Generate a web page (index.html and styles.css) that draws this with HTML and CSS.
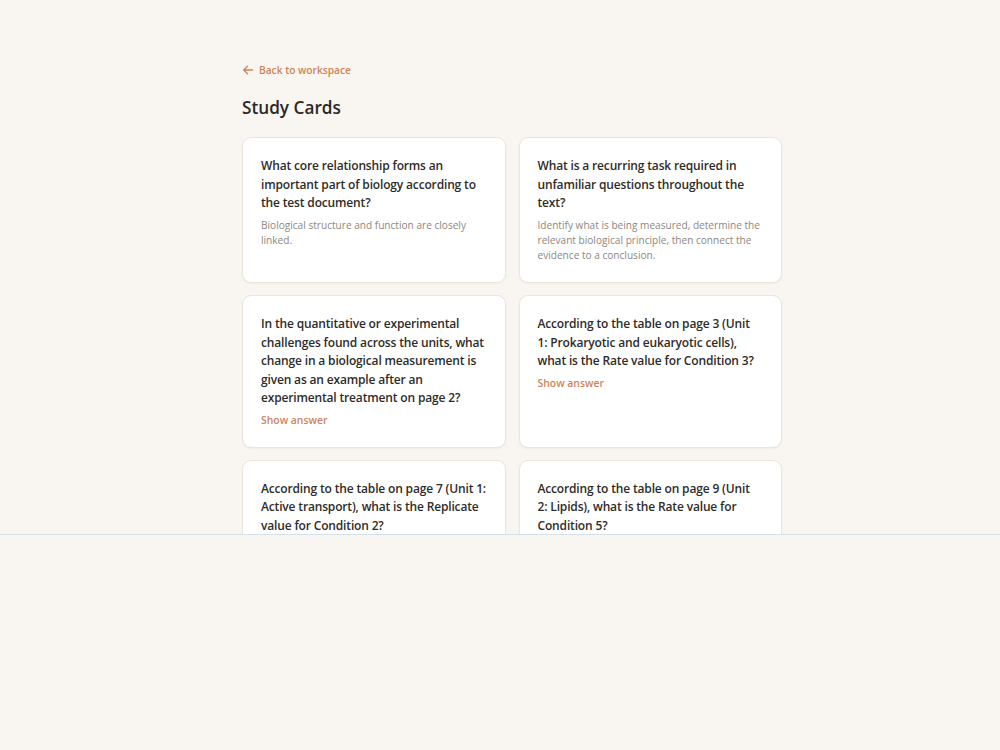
FILE: index.html
```html
<!DOCTYPE html>
<html>
<head>
<meta charset="utf-8">
<link rel="stylesheet" href="styles.css">
</head>
<body>
<div class="frame">
  <main class="page">
    <a class="back" href="#">
      <svg width="12" height="12" viewBox="0 0 12 12" fill="none" stroke="currentColor" stroke-width="1.3" stroke-linecap="round" stroke-linejoin="round"><path d="M10.5 6H1.8M5.5 2.2L1.7 6l3.8 3.8"/></svg>
      <span>Back to workspace</span>
    </a>
    <h1 class="title">Study Cards</h1>
    <div class="grid">
      <div class="card">
        <div class="q">What core relationship forms an important part of biology according to the test document?</div>
        <div class="a">Biological structure and function are closely linked.</div>
      </div>
      <div class="card">
        <div class="q">What is a recurring task required in unfamiliar questions throughout the text?</div>
        <div class="a">Identify what is being measured, determine the relevant biological principle, then connect the evidence to a conclusion.</div>
      </div>
      <div class="card">
        <div class="q">In the quantitative or experimental challenges found across the units, what change in a biological measurement is given as an example after an experimental treatment on page 2?</div>
        <a class="show" href="#">Show answer</a>
      </div>
      <div class="card">
        <div class="q">According to the table on page 3 (Unit 1: Prokaryotic and eukaryotic cells), what is the Rate value for Condition 3?</div>
        <a class="show" href="#">Show answer</a>
      </div>
      <div class="card">
        <div class="q">According to the table on page 7 (Unit 1: Active transport), what is the Replicate value for Condition 2?</div>
        <a class="show" href="#">Show answer</a>
      </div>
      <div class="card">
        <div class="q">According to the table on page 9 (Unit 2: Lipids), what is the Rate value for Condition 5?</div>
        <a class="show" href="#">Show answer</a>
      </div>
    </div>
  </main>
</div>
</body>
</html>
```
FILE: styles.css
```css
html, body {
  margin: 0;
  padding: 0;
  background: #f9f6f1;
}
body {
  font-family: "Open Sans", "Noto Sans", sans-serif;
  color: #2c2a27;
}
.frame {
  height: 534px;
  overflow: hidden;
  border-bottom: 1px solid #d3e2ea;
  background: #f9f6f1;
}
.page {
  width: 540px;
  margin: 0 auto;
  padding: 59px 0 40px;
  position: relative;
  left: 12px;
}
.back {
  display: inline-flex;
  align-items: center;
  gap: 5px;
  color: #cd835a;
  text-decoration: none;
  font-size: 10.2px;
  font-weight: 600;
  line-height: 16px;
}
.title {
  margin: 14px 0 0;
  font-size: 17.2px;
  font-weight: 600;
  line-height: 26px;
  color: #2a2826;
}
.grid {
  margin-top: 16px;
  display: grid;
  grid-template-columns: 1fr 1fr;
  column-gap: 13px;
  row-gap: 12px;
}
.card {
  background: #ffffff;
  border: 1px solid #ebe5dc;
  border-radius: 9px;
  box-shadow: 0 1px 2px rgba(60, 40, 20, 0.05);
  padding: 19px 18px 19px;
}
.card:nth-child(even) {
  padding-right: 19.5px;
}
.q {
  font-size: 12px;
  letter-spacing: -0.16px;
  font-weight: 600;
  line-height: 18.5px;
  color: #2e2c29;
}
.a {
  margin-top: 5px;
  font-size: 10.1px;
  line-height: 15.2px;
  color: #8c8781;
}
.show {
  display: block;
  margin-top: 5px;
  font-size: 10.4px;
  font-weight: 600;
  line-height: 15px;
  color: #cd835a;
  text-decoration: none;
}
```
